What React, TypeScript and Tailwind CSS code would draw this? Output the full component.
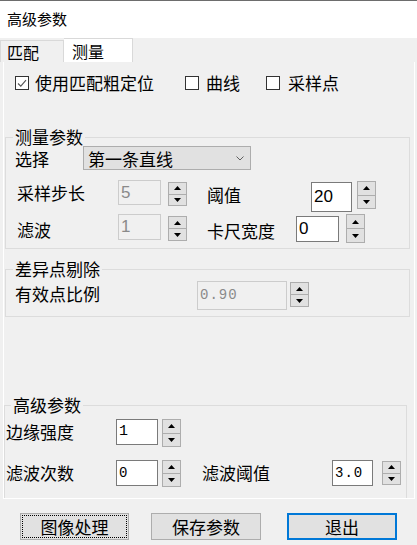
import type { ReactNode } from 'react'

function Spin({ className = '' }: { className?: string }) {
  return (
    <div className={`flex w-[19px] shrink-0 flex-col ${className}`}>
      <div className="flex flex-1 items-center justify-center border border-[#adadad] bg-[#e1e1e1]">
        <svg width="7" height="4" viewBox="0 0 7 4"><path d="M3.5 0 7 4H0z" fill="#000" /></svg>
      </div>
      <div className="flex flex-1 items-center justify-center border border-t-0 border-[#adadad] bg-[#e1e1e1]">
        <svg width="7" height="4" viewBox="0 0 7 4"><path d="M0 0h7L3.5 4z" fill="#000" /></svg>
      </div>
    </div>
  )
}

function Field({ value, off = false, mono = false, className = '' }: { value: string; off?: boolean; mono?: boolean; className?: string }) {
  return (
    <div
      className={`flex shrink-0 items-center pl-[2px] border ${
        off ? 'border-[#cccccc] bg-[#f0f0f0] text-[#8a8a8a]' : 'border-[#7a7a7a] bg-white text-black'
      } ${mono ? "font-['Liberation_Mono',monospace] text-[14px] tracking-[1px]" : "font-['Liberation_Sans',sans-serif] text-[17px]"} ${className}`}
    >
      {value}
    </div>
  )
}

function Label({ children, className = '' }: { children: ReactNode; className?: string }) {
  return <div className={`shrink-0 leading-[17px] ${className}`}>{children}</div>
}

function Check({ checked = false }: { checked?: boolean }) {
  return (
    <div className="flex h-[14px] w-[14px] shrink-0 items-center justify-center border border-[#333333] bg-white">
      {checked && (
        <svg width="12" height="12" viewBox="0 0 12 12">
          <path d="M2 6.5 4.8 9.2 10 3.2" fill="none" stroke="#555" strokeWidth="1.1" />
        </svg>
      )}
    </div>
  )
}

export default function App() {
  return (
    <div className="flex h-[545px] w-[417px] flex-col overflow-hidden bg-[#f0f0f0] font-['Noto_Sans_CJK_SC',sans-serif] text-[17px] text-black">
      {/* title */}
      <div className="flex h-[38px] shrink-0 items-center border-t border-[#6d6d6d] bg-white pl-[7px] text-[15px]">
        高级参数
      </div>

      {/* tabs */}
      <div className="flex h-[24px] shrink-0 items-end text-[16px]">
        <div className="flex h-[22px] w-[64px] items-center border-t border-r border-l border-[#d9d9d9] pl-[6px]">匹配</div>
        <div className="flex h-[24px] w-[69px] items-center border-t border-r border-[#d9d9d9] bg-white pl-[8px]">测量</div>
      </div>

      {/* tab page */}
      <div className="ml-[3px] flex h-[437px] w-[412px] shrink-0 flex-col overflow-hidden border-r border-b border-l border-white">
        <div className="mt-[12px] flex h-[17px] shrink-0 items-center">
          <div className="ml-[11px] flex w-[170px] items-center">
            <Check checked />
            <span className="ml-[6px] leading-[17px]">使用匹配粗定位</span>
          </div>
          <div className="flex w-[81px] items-center">
            <Check />
            <span className="ml-[7px] leading-[17px]">曲线</span>
          </div>
          <div className="flex items-center">
            <Check />
            <span className="ml-[8px] leading-[17px]">采样点</span>
          </div>
        </div>

        {/* 测量参数 */}
        <fieldset className="mt-[38px] ml-[1px] h-[120px] w-[405px] shrink-0 border border-[#dcdcdc]">
          <legend className="ml-[7px] px-[2px] leading-[16px]">测量参数</legend>
          <div className="mt-[1px] flex h-[24px] items-center">
            <Label className="w-[77px] pl-[9px]">选择</Label>
            <div className="flex h-[24px] w-[168px] items-center justify-between border border-[#adadad] bg-[#e1e1e1] pr-[6px] pl-[4px]">
              <span className="leading-[17px]">第一条直线</span>
              <svg width="8" height="5" viewBox="0 0 8 5"><path d="M0.5 0.5 4 4 7.5 0.5" fill="none" stroke="#606060" strokeWidth="1" /></svg>
            </div>
          </div>
          <div className="mt-[10px] flex h-[33px] items-start">
            <Label className="mt-[4px] w-[112px] pl-[11px]">采样步长</Label>
            <Field value="5" off className="h-[25px] w-[43px]" />
            <Spin className="mt-[2px] ml-[7px] h-[24px]" />
            <Label className="mt-[6px] ml-[20px] w-[104px]">阈值</Label>
            <Field value="20" className="mt-[2px] h-[30px] w-[41px]" />
            <Spin className="mt-[1px] ml-[5px] h-[28px]" />
          </div>
          <div className="mt-[1px] flex h-[30px] items-start">
            <Label className="mt-[7px] w-[112px] pl-[11px]">滤波</Label>
            <Field value="1" off className="h-[26px] w-[43px]" />
            <Spin className="mt-[2px] ml-[7px] h-[25px]" />
            <Label className="mt-[8px] ml-[20px] w-[89px]">卡尺宽度</Label>
            <Field value="0" className="mt-[2px] h-[26px] w-[43px]" />
            <Spin className="ml-[7px] h-[29px]" />
          </div>
        </fieldset>

        {/* 差异点剔除 */}
        <fieldset className="mt-[11px] ml-[1px] h-[57px] w-[405px] shrink-0 border border-[#dcdcdc]">
          <legend className="ml-[7px] px-[2px] leading-[18px]">差异点剔除</legend>
          <div className="flex items-start">
            <Label className="mt-[7px] w-[191px] pl-[9px]">有效点比例</Label>
            <Field value="0.90" off mono className="mt-[3px] h-[29px] w-[90px]" />
            <Spin className="mt-[4px] ml-[3px] h-[25px]" />
          </div>
        </fieldset>

        {/* 高级参数 */}
        <fieldset className="mt-[79px] h-[110px] w-[403px] shrink-0 border border-[#dcdcdc]">
          <legend className="ml-[6px] px-[2px] leading-[18px]">高级参数</legend>
          <div className="flex h-[46px] items-start">
            <Label className="mt-[9px] w-[111px] pl-[1px]">边缘强度</Label>
            <Field value="1" mono className="mt-[5px] h-[26px] w-[42px] text-[15px]" />
            <Spin className="mt-[5px] ml-[4px] h-[28px]" />
          </div>
          <div className="flex items-start">
            <Label className="mt-[4px] w-[111px] pl-[1px]">滤波次数</Label>
            <Field value="0" mono className="h-[26px] w-[42px]" />
            <Spin className="ml-[4px] h-[27px]" />
            <Label className="mt-[4px] ml-[21px] w-[130px]">滤波阈值</Label>
            <Field value="3.0" mono className="h-[26px] w-[41px]" />
            <Spin className="mt-[1px] ml-[9px] h-[24px]" />
          </div>
        </fieldset>
      </div>

      {/* buttons */}
      <div className="mt-[14px] flex h-[27px] shrink-0 items-stretch">
        <button className="ml-[20px] flex w-[109px] items-center justify-center border border-[#adadad] bg-[#e1e1e1] outline-1 -outline-offset-3 outline-black outline-dotted">
          图像处理
        </button>
        <button className="ml-[22px] flex w-[110px] items-center justify-center border border-[#adadad] bg-[#e1e1e1]">
          保存参数
        </button>
        <button className="ml-[26px] flex w-[110px] items-center justify-center border-2 border-[#0078d7] bg-[#e1e1e1]">
          退出
        </button>
      </div>
    </div>
  )
}
